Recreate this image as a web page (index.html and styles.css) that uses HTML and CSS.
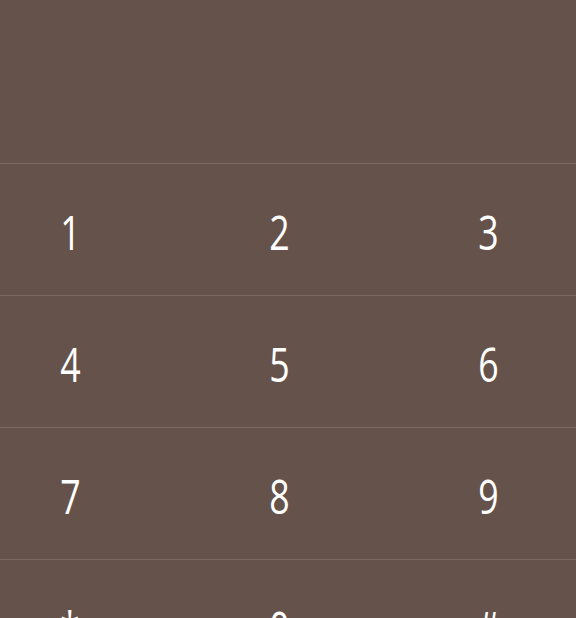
FILE: index.html
```html
<!DOCTYPE html>
<html>
<head>
<meta charset="utf-8">
<link rel="stylesheet" href="styles.css">
</head>
<body>
<div class="dialer">
  <div class="display"></div>
  <div class="keypad">
    <div class="row"><div class="key"><span>1</span></div><div class="key"><span>2</span></div><div class="key"><span>3</span></div></div>
    <div class="row"><div class="key"><span>4</span></div><div class="key"><span>5</span></div><div class="key"><span>6</span></div></div>
    <div class="row"><div class="key"><span>7</span></div><div class="key"><span>8</span></div><div class="key"><span>9</span></div></div>
    <div class="row"><div class="key"><span>*</span></div><div class="key"><span>0</span></div><div class="key"><span>#</span></div></div>
  </div>
</div>
</body>
</html>
```

FILE: styles.css
```css
html, body {
  margin: 0;
  padding: 0;
  background: #65534b;
  overflow: hidden;
}
.dialer {
  width: 576px;
  height: 618px;
  display: flex;
  flex-direction: column;
}
.display {
  height: 163px;
  flex: none;
}
.row {
  display: grid;
  grid-template-columns: 140px 278px 140px;
  height: 131px;
  border-top: 1px solid #7b6961;
}
.key {
  display: flex;
  align-items: center;
  justify-content: center;
  padding-top: 6px;
  box-sizing: border-box;
}
.key span {
  display: inline-block;
  font-family: "Open Sans", sans-serif;
  font-size: 47px;
  font-weight: 500;
  line-height: 1;
  color: #ffffff;
  transform: scaleX(0.76);
}
```
